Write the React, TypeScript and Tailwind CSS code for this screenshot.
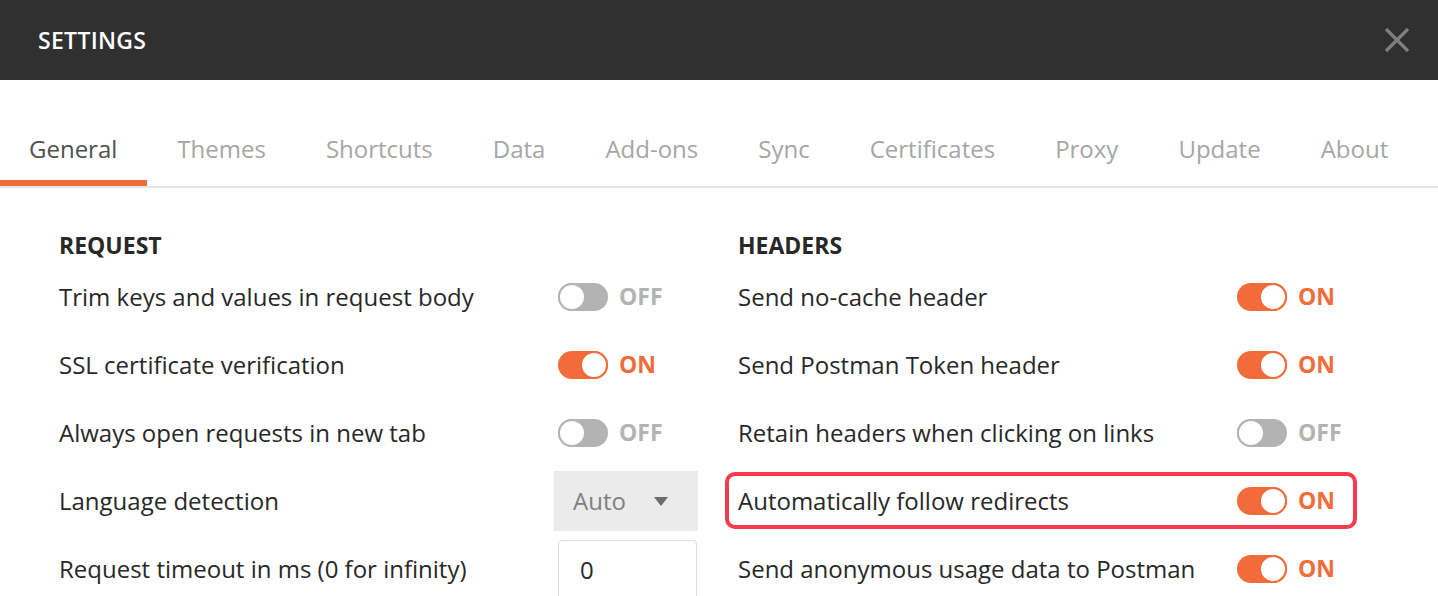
import React from "react";

type Row =
  | { label: string; kind: "toggle"; on: boolean; highlight?: boolean }
  | { label: string; kind: "select"; value: string }
  | { label: string; kind: "input"; value: string };

const tabs = [
  "General",
  "Themes",
  "Shortcuts",
  "Data",
  "Add-ons",
  "Sync",
  "Certificates",
  "Proxy",
  "Update",
  "About",
];

const requestRows: Row[] = [
  { label: "Trim keys and values in request body", kind: "toggle", on: false },
  { label: "SSL certificate verification", kind: "toggle", on: true },
  { label: "Always open requests in new tab", kind: "toggle", on: false },
  { label: "Language detection", kind: "select", value: "Auto" },
  { label: "Request timeout in ms (0 for infinity)", kind: "input", value: "0" },
];

const headerRows: Row[] = [
  { label: "Send no-cache header", kind: "toggle", on: true },
  { label: "Send Postman Token header", kind: "toggle", on: true },
  { label: "Retain headers when clicking on links", kind: "toggle", on: false },
  { label: "Automatically follow redirects", kind: "toggle", on: true, highlight: true },
  { label: "Send anonymous usage data to Postman", kind: "toggle", on: true },
];

const Toggle = ({ on }: { on: boolean }) => (
  <div className="flex items-center gap-[11px]">
    <div
      className={`relative h-[28px] w-[50px] rounded-full ${
        on ? "bg-[#f26b3a]" : "bg-[#b3b3b3]"
      }`}>
      <span
        className={`absolute top-0 h-[28px] w-[28px] rounded-full border-[2px] bg-white ${
          on ? "right-0 border-[#f26b3a]" : "left-0 border-[#b3b3b3]"
        }`}
      />
    </div>
    <span
      className={`mt-[-2px] text-[23px] font-bold ${
        on ? "text-[#f26b3a]" : "text-[#b3b3b3]"
      }`}>
      {on ? "ON" : "OFF"}
    </span>
  </div>
);

const Control = ({ row }: { row: Row }) => {
  if (row.kind === "toggle") return <Toggle on={row.on} />;
  if (row.kind === "select")
    return (
      <div className="ml-[-4px] flex h-[60px] w-[144px] items-center justify-between bg-[#ebebeb] pl-[19px] pr-[30px] text-[24px] text-[#808080]">
        <span>{row.value}</span>
        <svg width="14" height="9" viewBox="0 0 14 9">
          <path d="M0 0h14L7 9z" fill="#6b6b6b" />
        </svg>
      </div>
    );
  return (
    <div className="mt-[5px] flex h-[60px] w-[139px] self-start items-center rounded-[4px] border border-[#dedede] pl-[21px] text-[24px] text-[#282828]">
      {row.value}
    </div>
  );
};

const Column = ({ title, rows }: { title: string; rows: Row[] }) => (
  <div className="flex flex-col">
    <h2 className="h-[35px] text-[23px] font-bold leading-[35px] text-[#282828]">
      {title}
    </h2>
    {rows.map((row) => (
      <div key={row.label} className="relative flex h-[68px] items-center">
        {row.kind === "toggle" && row.highlight && (
          <span className="absolute left-[-13px] top-[5px] bottom-[6px] w-[632px] rounded-[10px] border-[4px] border-[#f73a4e]" />
        )}
        <div className="w-[499px] text-[24px] text-[#282828]">{row.label}</div>
        <Control row={row} />
      </div>
    ))}
  </div>
);

export default function App() {
  return (
    <div
      className="h-[596px] w-[1438px] overflow-hidden bg-white"
      style={{ fontFamily: '"Open Sans", "Noto Sans", sans-serif' }}>
      <div className="flex h-[80px] items-center justify-between bg-[#303030] pl-[38px] pr-[28px]">
        <span className="text-[23px] font-semibold tracking-[0.3px] text-white">
          SETTINGS
        </span>
        <svg width="26" height="26" viewBox="0 0 26 26">
          <path
            d="M2 2L24 24M24 2L2 24"
            stroke="#7f7f7f"
            strokeWidth="3.2"
          />
        </svg>
      </div>

      <div className="flex border-b-2 border-[#e6e6e6] pt-[52px]">
        {tabs.map((tab, i) => (
          <div
            key={tab}
            className={`border-b-[6px] pb-[15px] text-[24px] leading-[33px] ${
              i === 0
                ? "border-[#f26b3a] pl-[29px] pr-[30px] text-[#505050]"
                : "border-transparent px-[30px] text-[#a6a6a6]"
            }`}>
            {tab}
          </div>
        ))}
      </div>

      <div className="grid grid-cols-[640px_640px] gap-x-[39px] pl-[59px] pt-[40px]">
        <Column title="REQUEST" rows={requestRows} />
        <Column title="HEADERS" rows={headerRows} />
      </div>
    </div>
  );
}
